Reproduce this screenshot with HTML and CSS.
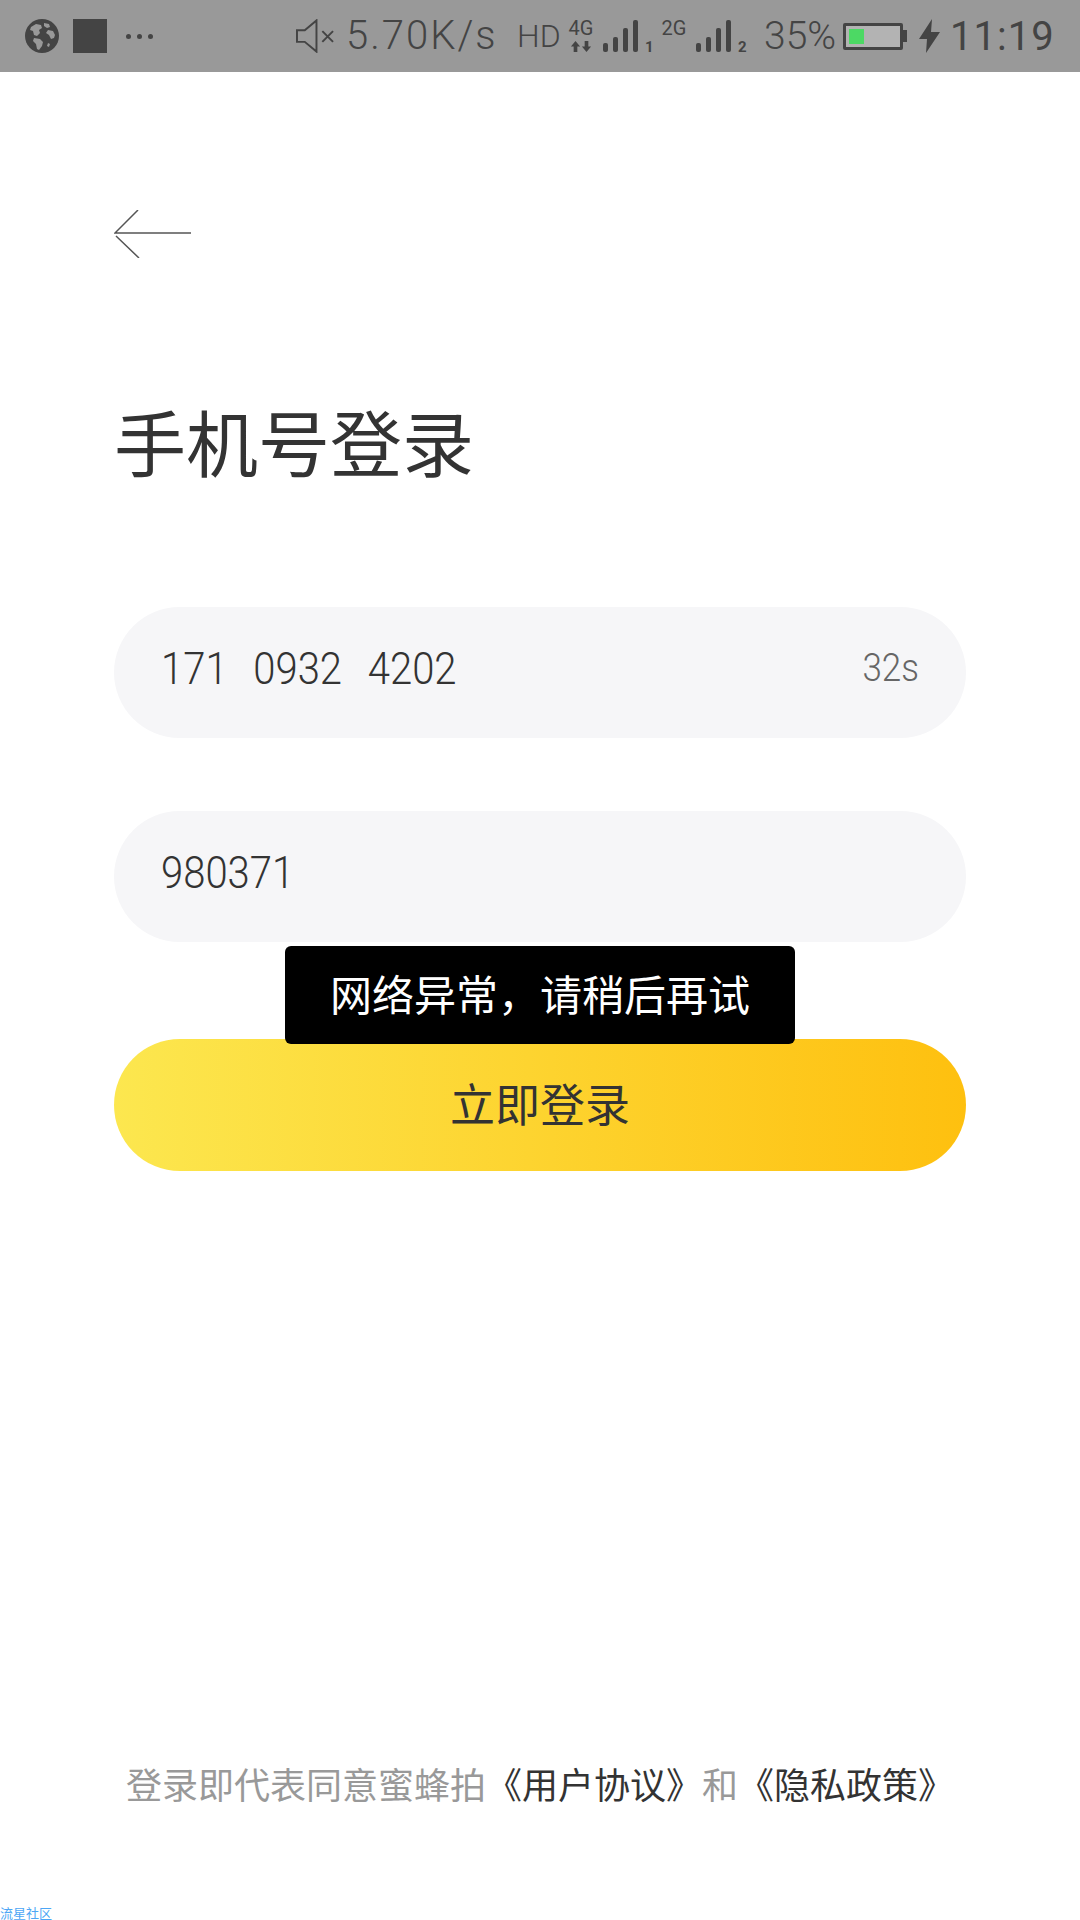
FILE: index.html
```html
<!DOCTYPE html>
<html lang="zh-CN">
<head>
  <meta charset="UTF-8">
  <meta name="viewport" content="width=device-width, initial-scale=1.0">
  <title>手机号登录</title>
  <link rel="stylesheet" href="styles.css">
</head>
<body>
  <!-- 状态栏 -->
  <div class="status-bar">
    <svg class="icon-globe" viewBox="0 0 34 34">
      <circle cx="17" cy="17" r="17" fill="#444"/>
      <path d="M6 8l5-3 5 1 1 3-3 2 1 3-3 3-3-1-1-4-3-1zM19 4l5 1 1 3-3 1-3-2zM23 11l5 1 2 4-1 3-3 1-2-4-3-2zM9 19l6 1 3 3-1 4-3 4-2-1-1-5-3-3zM23 24l2 1-1 3-2-1z" fill="#999"/>
    </svg>
    <span class="icon-square"></span>
    <span class="status-dots">
      <i></i><i></i><i></i>
    </span>
    <svg class="icon-mute" viewBox="0 0 40 34">
      <path d="M1 11h8L21 1v32L9 23H1z" fill="none" stroke="#444" stroke-width="2"/>
      <path d="M27 12l11 11M38 12L27 23" fill="none" stroke="#444" stroke-width="2"/>
    </svg>
    <span class="status-speed">5.70K/s</span>
    <span class="status-hd">HD</span>
    <span class="net net-4g">
      <span class="net-label">4G</span>
      <svg class="net-arrows" viewBox="0 0 24 12">
        <path d="M6 0l5 6H8v6H4V6H1zM18 12l-5-6h3V0h4v6h3z" fill="#444"/>
      </svg>
    </span>
    <span class="signal"><i class="s1"></i><i class="s2"></i><i class="s3"></i><i class="s4"></i></span>
    <span class="sim-no">1</span>
    <span class="net net-2g"><span class="net-label">2G</span></span>
    <span class="signal"><i class="s1"></i><i class="s2"></i><i class="s3"></i><i class="s4"></i></span>
    <span class="sim-no">2</span>
    <span class="status-battery-text">35%</span>
    <span class="battery"><span class="battery-level"></span></span>
    <span class="battery-nub"></span>
    <svg class="icon-bolt" viewBox="0 0 21 34">
      <path d="M13 0L0 20h8L7 34 21 13h-9z" fill="#444"/>
    </svg>
    <span class="status-time">11:19</span>
  </div>

  <div class="page">
    <svg class="icon-back" viewBox="0 0 77 48">
      <path d="M24 0L1 23h76M2 26l23 22" fill="none" stroke="#555" stroke-width="1.5"/>
    </svg>

    <h1>手机号登录</h1>

    <div class="form">
      <div class="field">
        <span class="field-text">171 0932 4202</span>
        <span class="countdown">32s</span>
      </div>
      <div class="field">
        <span class="field-text">980371</span>
      </div>
      <button class="login-btn">立即登录</button>
      <div class="toast">网络异常，请稍后再试</div>
    </div>

    <p class="agreement">登录即代表同意蜜蜂拍<a>《用户协议》</a>和<a>《隐私政策》</a></p>
    <div class="watermark">流星社区</div>
  </div>
</body>
</html>
```

FILE: styles.css
```css
* { box-sizing: border-box; }
html, body {
  margin: 0;
  padding: 0;
  height: 1920px;
  overflow: hidden;
}
body {
  display: flex;
  flex-direction: column;
  background-color: #fff;
  color: #333;
  font-family: "Noto Sans CJK SC", Roboto, sans-serif;
}

/* 状态栏 */
.status-bar {
  flex: none;
  display: flex;
  align-items: center;
  height: 72px;
  padding-left: 25px;
  background-color: #999;
  color: #444;
  font-family: Roboto, sans-serif;
}
.icon-globe { width: 34px; height: 34px; }
.icon-square {
  width: 34px;
  height: 34px;
  margin-left: 14px;
  background-color: #444;
}
.status-dots {
  display: flex;
  gap: 6px;
  margin-left: 19px;
}
.status-dots i {
  width: 5px;
  height: 5px;
  border-radius: 50%;
  background-color: #444;
}
.icon-mute {
  width: 39px;
  height: 34px;
  margin-left: 143px;
}
.status-speed {
  margin-left: 11px;
  width: 146px;
  font-size: 40px;
  font-weight: 300;
  letter-spacing: 2px;
  line-height: 68px;
  white-space: nowrap;
}
.status-hd {
  margin-left: 25px;
  width: 40px;
  font-size: 32px;
  font-weight: 300;
  white-space: nowrap;
}
.net {
  display: flex;
  flex-direction: column;
  align-items: center;
  align-self: flex-start;
  margin-top: 19px;
  width: 28px;
}
.net-4g { margin-left: 10px; }
.net-2g { margin-left: 6px; }
.net-label {
  font-size: 20px;
  line-height: 18px;
}
.net-arrows {
  width: 22px;
  height: 11px;
  margin-top: 4px;
}
.signal {
  display: flex;
  align-items: flex-end;
  align-self: flex-start;
  gap: 5px;
  height: 32px;
  margin-top: 20px;
  margin-left: 8px;
}
.signal i {
  width: 5px;
  border-radius: 2px;
  background-color: #444;
}
.signal .s1 { height: 9px; }
.signal .s2 { height: 15px; }
.signal .s3 { height: 24px; }
.signal .s4 { height: 32px; }
.sim-no {
  align-self: flex-start;
  margin-top: 40px;
  margin-left: 7px;
  width: 9px;
  font-size: 15px;
  font-weight: 700;
  line-height: 14px;
}
.status-battery-text {
  margin-left: 17px;
  width: 73px;
  font-size: 39px;
  font-weight: 300;
  line-height: 68px;
  white-space: nowrap;
}
.battery {
  width: 60px;
  height: 27px;
  margin-left: 6px;
  padding: 3px;
  border: 3px solid #444;
  border-radius: 2px;
  background-color: #b3b3b3;
  background-clip: padding-box;
}
.battery-level {
  display: block;
  width: 15px;
  height: 100%;
  background-color: #4cd964;
}
.battery-nub {
  width: 4px;
  height: 12px;
  background-color: #444;
}
.icon-bolt {
  width: 21px;
  height: 34px;
  margin-left: 12px;
}
.status-time {
  margin-left: 10px;
  font-size: 40px;
  letter-spacing: 1px;
}

/* 页面内容 */
.page {
  flex: 1;
  display: flex;
  flex-direction: column;
  padding: 138px 114px 0;
}
.icon-back {
  display: block;
  width: 77px;
  height: 48px;
}
h1 {
  margin: 132px 0 0;
  font-size: 72px;
  font-weight: 400;
  line-height: 100px;
  white-space: nowrap;
}
.form {
  position: relative;
  display: flex;
  flex-direction: column;
  margin-top: 117px;
}
.field {
  display: flex;
  justify-content: space-between;
  align-items: center;
  height: 131px;
  margin-bottom: 73px;
  padding: 0 47px 8px 47px;
  border-radius: 66px;
  background-color: #f6f6f8;
}
.field-text, .countdown {
  display: inline-block;
  font-family: Roboto, sans-serif;
  font-size: 40px;
  font-weight: 300;
  word-spacing: 16px;
  transform: scaleY(1.12);
}
.countdown {
  font-size: 35px;
  color: #666;
}
.login-btn {
  height: 132px;
  margin-top: 24px;
  padding: 0 0 6px;
  border: none;
  border-radius: 66px;
  background: linear-gradient(90deg, #fce74f, #fec00f);
  color: #333;
  font-family: inherit;
  font-size: 45px;
}
/* 提示框盖在表单上 */
.toast {
  position: absolute;
  top: 339px;
  left: 171px;
  width: 510px;
  height: 98px;
  border-radius: 6px;
  background-color: #000;
  color: #fff;
  font-size: 42px;
  line-height: 94px;
  text-align: center;
}
.agreement {
  margin: auto -30px 0;
  font-size: 36px;
  line-height: 50px;
  color: #999;
  text-align: center;
  white-space: nowrap;
}
.agreement a { color: #333; }
.watermark {
  margin: 98px -114px 0;
  font-size: 13px;
  line-height: 14px;
  color: #4da6f5;
}
```
